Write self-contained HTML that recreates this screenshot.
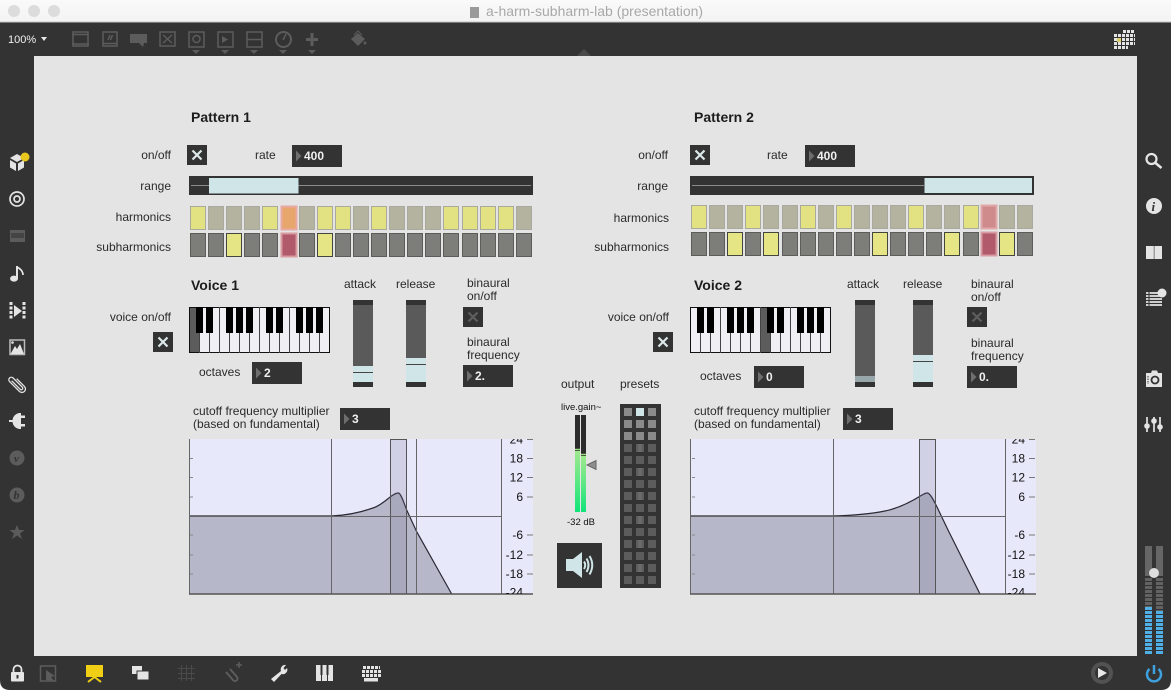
<!DOCTYPE html>
<html><head><meta charset="utf-8"><title>a-harm-subharm-lab (presentation)</title>
<style>
html,body{margin:0;padding:0;background:#fff}
svg{display:block;position:absolute;left:0;top:0}
text{font-family:"Liberation Sans",Arial,sans-serif;font-size:12px;fill:#2a2a2a}
.h{font-weight:bold;font-size:14px;fill:#1c1c1c}
.e{text-anchor:end}
.n{font-weight:bold;fill:#f0f0f0;font-size:12px}
.g{font-size:12px;fill:#111;text-anchor:end}
.Cy{fill:#e3e283;stroke:#a9a99c}.Cg{fill:#b3b39f;stroke:#a9a9a0}.Co{fill:#e7a76c;stroke:#e8a8a4;stroke-width:2}.Cp{fill:#cf8a8c;stroke:#e0a8a8;stroke-width:2}
.Cd{fill:#7d7d79;stroke:#5c5c58}.CY{fill:#e6e586;stroke:#454540}.Cr{fill:#b05a6c;stroke:#d99aa0;stroke-width:2}
.i{fill:#e4e4e4}.dim{fill:#5c5c5c}.ds{fill:none;stroke:#5c5c5c;stroke-width:1.5}
.ws{fill:none;stroke:#e6e6e6;stroke-width:2}
</style></head><body>
<svg width="1171" height="690" viewBox="0 0 1171 690" xmlns="http://www.w3.org/2000/svg">
<defs>
<linearGradient id="tb" x1="0" y1="0" x2="0" y2="1"><stop offset="0" stop-color="#fafafa"/><stop offset="1" stop-color="#f3f3f3"/></linearGradient>
<linearGradient id="gr" x1="0" y1="0" x2="0" y2="1"><stop offset="0" stop-color="#9fe88e"/><stop offset=".5" stop-color="#5ce884"/><stop offset="1" stop-color="#10e47a"/></linearGradient>
<clipPath id="c1"><rect x="189" y="439" width="346" height="155"/></clipPath>
<clipPath id="c2"><rect x="690" y="439" width="346" height="155"/></clipPath>
<g id="tog"><rect width="20" height="20" fill="#333"/><path d="M5.500 5.500L14.500 14.500M14.500 5.500L5.500 14.500" stroke="#dde8ea" stroke-width="2.200" fill="none"/></g>
<g id="togd"><rect width="20" height="20" fill="#333"/><path d="M5.500 5.500L14.500 14.500M14.500 5.500L5.500 14.500" stroke="#5e5e5e" stroke-width="2.200" fill="none"/></g>
<g id="num"><rect width="50" height="22" fill="#333"/><path d="M4 5.500L9.500 11L4 16.500Z" fill="#6e6e6e"/></g>
<g id="blk"><rect x="0" width="7" height="26" fill="#000"/><rect x="10" width="7" height="26" fill="#000"/><rect x="30" width="7" height="26" fill="#000"/><rect x="40" width="7" height="26" fill="#000"/><rect x="50" width="7" height="26" fill="#000"/><rect x="70" width="7" height="26" fill="#000"/><rect x="80" width="7" height="26" fill="#000"/><rect x="100" width="7" height="26" fill="#000"/><rect x="110" width="7" height="26" fill="#000"/><rect x="120" width="7" height="26" fill="#000"/></g>
<g id="wh"><path d="M10.500 0V46M20.500 0V46M30.500 0V46M40.500 0V46M50.500 0V46M60.500 0V46M70.500 0V46M80.500 0V46M90.500 0V46M100.500 0V46M110.500 0V46M120.500 0V46M130.500 0V46" stroke="#444" stroke-width="1"/></g>
<g id="arr"><path d="M-4 0H4L0 4Z" fill="#5c5c5c"/></g>
<g id="lab"><path d="M0 19.500H3M0 38.500H3M0 58H3M0 96H3M0 116H3M0 135H3" stroke="#888"/>
<text class="g" x="333" y="4.500">24</text><text class="g" x="333" y="23.500">18</text><text class="g" x="333" y="42.500">12</text><text class="g" x="333" y="62">6</text><text class="g" x="333" y="100">-6</text><text class="g" x="333" y="120">-12</text><text class="g" x="333" y="139">-18</text><text class="g" x="333" y="157.500">-24</text>
<path d="M337 0.500H343M337 19.500H343M337 38.500H343M337 58H343M337 96H343M337 116H343M337 135H343" stroke="#777"/></g>
</defs>

<!-- window chrome -->
<rect width="1171" height="690" fill="#333"/>
<rect width="1171" height="22" fill="url(#tb)"/>
<rect y="21.500" width="1171" height="1" fill="#c4c4c4"/>
<circle cx="14" cy="11" r="6" fill="#dcdcdc"/><circle cx="34" cy="11" r="6" fill="#dcdcdc"/><circle cx="54" cy="11" r="6" fill="#dcdcdc"/>
<rect x="470" y="7" width="9" height="11" fill="#9a9a9a"/>
<text x="486" y="16" style="font-size:14px;fill:#a8a8a8">a-harm-subharm-lab (presentation)</text>
<path d="M0 690V680Q0 690 10 690ZM1171 690V680Q1171 690 1161 690Z" fill="#fff"/>
<rect x="34" y="56" width="1103" height="600" fill="#e4e4e4"/>
<path d="M577 56L584 49L591 56Z" fill="#4a4a4a"/>

<!-- top toolbar -->
<text x="8" y="43" style="font-size:11px;fill:#f0f0f0">100%</text><path d="M41 37H47L44 41Z" fill="#e8e8e8"/>
<g>
<rect class="ds" x="73" y="32" width="15" height="14"/><path class="ds" d="M72 34.500H89M72 44H89"/>
<rect class="ds" x="103" y="32" width="14" height="14"/><path class="ds" d="M103 43.500H117M108 40L110 35M110.500 40L112.500 35"/>
<path class="dim" d="M130 34H147V43H144L143 47L139 43H130Z"/>
<rect class="ds" x="160" y="32" width="15" height="14"/><path class="ds" d="M163 35L172 43M172 35L163 43"/>
<rect class="ds" x="189" y="32" width="15" height="15"/><circle class="ds" cx="196.500" cy="39" r="3.500"/>
<rect class="ds" x="218" y="32" width="15" height="15"/><path class="dim" d="M222 36L228 39.500L222 43Z"/>
<rect class="ds" x="247" y="32" width="15" height="15"/><path class="ds" d="M247 39.500H262"/>
<circle class="ds" cx="283.500" cy="39.500" r="7.500" style="stroke-width:2"/><path class="ds" d="M283 40L286 34"/>
<path d="M312 33V46M306 39.500H318" stroke="#5c5c5c" stroke-width="3" fill="none"/>
<path class="dim" d="M351 39L358 33L365 39L358 46Z"/><path d="M354 35L358 31L362 35" fill="none" stroke="#5c5c5c"/><circle class="dim" cx="365" cy="43" r="1.500"/>
<use href="#arr" x="196" y="50"/><use href="#arr" x="225" y="50"/><use href="#arr" x="254" y="50"/><use href="#arr" x="283" y="50"/><use href="#arr" x="312" y="50"/>
</g>
<!-- top right grid -->
<g stroke="#e4e4e4" stroke-width="3" stroke-dasharray="3 1">
<path d="M1123 31.500H1135M1114 35.500H1135M1114 39.500H1135M1114 43.500H1135M1114 47.500H1128"/>
</g><rect x="1117" y="38" width="4" height="4" fill="#d8cf6a"/>

<!-- left sidebar -->
<path class="i" d="M17 154L24 158L17 162L10 158ZM10 160L16 163.500V171L10 167.500ZM24 160L18 163.500V171L24 167.500Z"/><circle cx="25" cy="157" r="4.500" fill="#e8c81e"/>
<circle cx="17" cy="199" r="7" fill="none" stroke="#e4e4e4" stroke-width="1.700"/><circle cx="17" cy="199" r="3" fill="none" stroke="#e4e4e4" stroke-width="1.700"/>
<rect x="10" y="230" width="15" height="12" fill="#5c5c5c"/><rect x="11" y="233" width="13" height="5" fill="#444"/>
<path class="i" d="M18 266V279A4 3 0 1 1 16 276V266Z"/><path class="ws" d="M17 267Q23 270 23 275" style="stroke-width:1.700"/>
<path d="M11 302V320M24 302V320" stroke="#e4e4e4" stroke-width="3" stroke-dasharray="3 1.500" fill="none"/><path class="i" d="M14 305L22 311L14 317Z"/>
<rect x="10" y="340" width="14.500" height="14.500" fill="none" stroke="#bbb" stroke-width="1.500"/><path class="i" d="M10.500 354L15 346L17 349L20 344L24 354Z"/><circle class="i" cx="12.500" cy="342.500" r="1.300"/>
<g transform="rotate(-45 17 384)"><path d="M15.500 378V390A1.500 1.500 0 0 0 18.500 390V377A2.500 2.500 0 0 0 13.500 377V391A3.500 3.500 0 0 0 20.500 391V380" fill="none" stroke="#e4e4e4" stroke-width="1.300"/></g>
<path class="i" d="M9 420H12.500A8 8 0 0 1 19 413H21V429H19A8 8 0 0 1 12.500 422H9Z"/><rect class="i" x="21" y="415.500" width="4" height="2.500"/><rect class="i" x="21" y="424" width="4" height="2.500"/>
<circle cx="17" cy="458" r="7.500" fill="#5c5c5c"/><text x="14" y="462" style="font:italic bold 11px 'Liberation Serif',serif;fill:#333">v</text>
<circle cx="17" cy="495" r="7.500" fill="#5c5c5c"/><text x="13.500" y="499" style="font:italic bold 12px 'Liberation Serif',serif;fill:#333">b</text>
<path class="dim" d="M17 525L19 530H24.500L20 533.500L22 539L17 535.500L12 539L14 533.500L9.500 530H15Z"/>

<!-- right sidebar -->
<circle cx="1151.500" cy="159" r="5" fill="none" stroke="#e6e6e6" stroke-width="2.200"/><path d="M1155.500 163L1161.500 168" stroke="#e6e6e6" stroke-width="2.500"/>
<circle class="i" cx="1154" cy="206" r="8"/><text x="1151.500" y="211" style="font:italic bold 13px 'Liberation Serif',serif;fill:#333">i</text>
<rect class="i" x="1146" y="246" width="16" height="13"/><rect x="1153.500" y="246" width="1.500" height="13" fill="#a0a0a0"/>
<path d="M1146 293H1160M1146 296H1162M1146 299H1162M1146 302H1162M1146 305H1162" stroke="#e4e4e4" stroke-width="1.700"/><path d="M1149 292V306" stroke="#333" stroke-width="1"/><circle class="i" cx="1162" cy="293" r="4.500"/>
<path class="i" d="M1146 373H1151L1152 370.500H1157L1158 373H1162V387H1146Z"/><circle cx="1155" cy="380" r="3.500" fill="none" stroke="#333" stroke-width="1.800"/><path d="M1148 376V384" stroke="#333" stroke-dasharray="1.500 1"/>
<path d="M1147 417V432M1154 417V432M1160 417V432" stroke="#e4e4e4" stroke-width="1.700"/><circle class="i" cx="1147" cy="426" r="2.800"/><circle class="i" cx="1154" cy="421" r="2.800"/><circle class="i" cx="1160" cy="427" r="2.800"/>

<!-- right meter -->
<rect x="1145" y="546" width="7" height="30" fill="#666"/><rect x="1156" y="546" width="7" height="30" fill="#666"/>
<path d="M1148.500 578V607M1159.500 578V611" stroke="#626262" stroke-width="7" stroke-dasharray="3 1"/>
<path d="M1148.500 607V654M1159.500 611V654" stroke="#4fb0e8" stroke-width="7" stroke-dasharray="3 1"/>
<circle cx="1154" cy="573" r="5" fill="#dedede"/>

<!-- bottom bar -->
<rect x="11" y="672" width="13" height="9.500" rx="1" fill="#e6e6e6"/><path d="M13.500 672V669.500A4 4 0 0 1 21.500 669.500V672" fill="none" stroke="#e6e6e6" stroke-width="1.800"/><rect x="16.500" y="675" width="2" height="3.500" fill="#333"/>
<path d="M40.500 666H55.500V681H40.500Z" class="ds"/><path class="dim" d="M46 670L55 676L51 677L54 681L46 680Z"/>
<rect x="86" y="665" width="17" height="12" fill="#f0cf14"/><path d="M88 682L94.500 677L101 682" fill="none" stroke="#f0cf14" stroke-width="2"/>
<rect x="132" y="666" width="10" height="8" fill="#e4e4e4"/><rect x="137" y="671" width="12" height="9" fill="#e4e4e4" stroke="#333"/>
<path d="M181.500 665V681M186.500 665V681M191.500 665V681M178 668.500H195M178 673.500H195M178 678.500H195" stroke="#4a4a4a" stroke-width="1"/>
<path d="M226 672L233 680A2 2 0 0 0 237 677L230 669" fill="none" stroke="#5c5c5c" stroke-width="2"/><path d="M236 665H242M239 662V668" stroke="#5c5c5c" stroke-width="1.500"/>
<path d="M271 679L281 671A4.500 4.500 0 0 1 286 665L283.500 668L285 670L287 668A4.500 4.500 0 0 1 281.500 674L274 682Z" fill="#e6e6e6"/>
<rect x="316" y="665" width="17" height="16" fill="#e4e4e4"/><path d="M321.500 665V681M327.500 665V681" stroke="#333" stroke-width="1"/><rect x="320.500" y="665" width="2" height="10" fill="#333"/><rect x="326.500" y="665" width="2" height="10" fill="#333"/>
<path d="M363 667.500H380M362 671.500H381M362 675.500H381" stroke="#e4e4e4" stroke-width="3" stroke-dasharray="3 1"/><rect x="364" y="678" width="14" height="3.500" fill="#e4e4e4"/>
<circle cx="1102" cy="673" r="9" fill="none" stroke="#525252" stroke-width="4"/><path d="M1098 668L1107 673L1098 678Z" fill="#e8e8e8"/>
<path d="M1149.500 669A7 7 0 1 0 1158.500 669" fill="none" stroke="#3ea0dc" stroke-width="2.500"/><path d="M1154 665V674" stroke="#3ea0dc" stroke-width="2.500"/>

<!-- PATTERN 1 -->
<text class="h" x="191" y="122">Pattern 1</text>
<text class="e" x="171" y="159">on/off</text><use href="#tog" x="187" y="145"/>
<text x="255" y="159">rate</text><use href="#num" x="292" y="145"/><text class="n" x="304" y="160">400</text>
<text class="e" x="171" y="190">range</text>
<rect x="189" y="176" width="344" height="19" fill="#333"/><path d="M191 185.500H531" stroke="#8a8a8a"/><rect x="209" y="178" width="89.500" height="15.500" fill="#cfe5e8"/>
<text class="e" x="171" y="221">harmonics</text><text class="e" x="171" y="251">subharmonics</text>
<g>
<rect class="Cy" x="190.500" y="206.500" width="15" height="23"/><rect class="Cg" x="208.500" y="206.500" width="15" height="23"/><rect class="Cg" x="226.500" y="206.500" width="15" height="23"/><rect class="Cg" x="244.500" y="206.500" width="15" height="23"/><rect class="Cy" x="262.500" y="206.500" width="15" height="23"/><rect class="Co" x="281.500" y="206.500" width="15" height="23"/><rect class="Cg" x="299.500" y="206.500" width="15" height="23"/><rect class="Cy" x="317.500" y="206.500" width="15" height="23"/><rect class="Cy" x="335.500" y="206.500" width="15" height="23"/><rect class="Cg" x="353.500" y="206.500" width="15" height="23"/><rect class="Cy" x="371.500" y="206.500" width="15" height="23"/><rect class="Cg" x="389.500" y="206.500" width="15" height="23"/><rect class="Cg" x="407.500" y="206.500" width="15" height="23"/><rect class="Cg" x="425.500" y="206.500" width="15" height="23"/><rect class="Cy" x="443.500" y="206.500" width="15" height="23"/><rect class="Cy" x="462.500" y="206.500" width="15" height="23"/><rect class="Cy" x="480.500" y="206.500" width="15" height="23"/><rect class="Cy" x="498.500" y="206.500" width="15" height="23"/><rect class="Cg" x="516.500" y="206.500" width="15" height="23"/>
<rect class="Cd" x="190.500" y="233.500" width="15" height="23"/><rect class="Cd" x="208.500" y="233.500" width="15" height="23"/><rect class="CY" x="226.500" y="233.500" width="15" height="23"/><rect class="Cd" x="244.500" y="233.500" width="15" height="23"/><rect class="Cd" x="262.500" y="233.500" width="15" height="23"/><rect class="Cr" x="281.500" y="233.500" width="15" height="23"/><rect class="Cd" x="299.500" y="233.500" width="15" height="23"/><rect class="CY" x="317.500" y="233.500" width="15" height="23"/><rect class="Cd" x="335.500" y="233.500" width="15" height="23"/><rect class="Cd" x="353.500" y="233.500" width="15" height="23"/><rect class="Cd" x="371.500" y="233.500" width="15" height="23"/><rect class="Cd" x="389.500" y="233.500" width="15" height="23"/><rect class="Cd" x="407.500" y="233.500" width="15" height="23"/><rect class="Cd" x="425.500" y="233.500" width="15" height="23"/><rect class="Cd" x="443.500" y="233.500" width="15" height="23"/><rect class="Cd" x="462.500" y="233.500" width="15" height="23"/><rect class="Cd" x="480.500" y="233.500" width="15" height="23"/><rect class="Cd" x="498.500" y="233.500" width="15" height="23"/><rect class="Cd" x="516.500" y="233.500" width="15" height="23"/>
</g>

<!-- VOICE 1 -->
<text class="h" x="191" y="290">Voice 1</text>
<text x="344" y="288">attack</text><text x="396" y="288">release</text>
<text x="467" y="287">binaural</text><text x="467" y="300">on/off</text>
<text class="e" x="171" y="321">voice on/off</text><use href="#tog" x="153" y="332"/>
<rect x="189.500" y="307.500" width="140" height="45" fill="#f0f0f4" stroke="#111"/>
<rect x="190" y="308" width="10" height="44" fill="#5c5c5c"/>
<use href="#wh" x="189" y="307"/><use href="#blk" x="196" y="307"/>
<text x="199" y="376">octaves</text><use href="#num" x="252" y="362"/><text class="n" x="264" y="377">2</text>
<rect x="353" y="300" width="20" height="87" fill="#5a5a5a"/><rect x="353" y="366" width="20" height="16" fill="#cfe5e8"/><rect x="353" y="300" width="20" height="5" fill="#333"/><rect x="353" y="382" width="20" height="5" fill="#333"/><path d="M353 372.500H373" stroke="#444"/>
<rect x="406" y="300" width="20" height="87" fill="#5a5a5a"/><rect x="406" y="358" width="20" height="24" fill="#cfe5e8"/><rect x="406" y="300" width="20" height="5" fill="#333"/><rect x="406" y="382" width="20" height="5" fill="#333"/><path d="M406 364.500H426" stroke="#444"/>
<use href="#togd" x="463" y="307"/>
<text x="467" y="346">binaural</text><text x="467" y="359">frequency</text>
<use href="#num" x="463" y="365"/><text class="n" x="475" y="380">2.</text>
<text x="193" y="415">cutoff frequency multiplier</text><text x="193" y="428">(based on fundamental)</text>
<use href="#num" x="340" y="408"/><text class="n" x="352" y="423">3</text>

<!-- graph 1 -->
<rect x="189" y="439" width="344" height="155" fill="#e8e8fb"/>
<path d="M189 516L331 516C345 515.500 360 512.500 373 508C382 505 388 498 393 495C395.500 493.500 397 492.800 398.500 493C401 493.500 404 503 406.700 510L416.700 531.700L451.700 594H189Z" fill="#b6b7c9"/>
<path d="M189 516L331 516C345 515.500 360 512.500 373 508C382 505 388 498 393 495C395.500 493.500 397 492.800 398.500 493C401 493.500 404 503 406.700 510L416.700 531.700L451.700 594" fill="none" stroke="#2a2a35" stroke-width="1.200"/>
<rect x="390.500" y="439.500" width="16" height="154.500" fill="#6a6a8a" fill-opacity=".18" stroke="#555"/>
<path d="M189.500 439V594M331.500 439V594M416.500 439V594M501.500 439V594M189 516.500H501" stroke="#666" stroke-width="1"/>
<path d="M189 594H533" stroke="#555" stroke-width="1.500"/>
<g clip-path="url(#c1)"><use href="#lab" x="190" y="439"/></g>

<!-- CENTER -->
<text x="561" y="388">output</text><text x="620" y="388">presets</text>
<text x="561" y="410" style="font-size:9.500px;fill:#111">live.gain~</text>
<rect x="575" y="415" width="11" height="97" fill="#2b2b2b"/>
<rect x="575" y="451" width="5" height="61" fill="url(#gr)"/><rect x="581" y="456" width="5" height="56" fill="url(#gr)"/>
<path d="M575 449.500H580" stroke="#9de080" stroke-width="1.500"/><path d="M581 454.500H586" stroke="#9de080" stroke-width="1.500"/>
<rect x="580" y="415" width="1" height="97" fill="#e4e4e4"/>
<path d="M587 465L596 460.500V469.500Z" fill="#8e8e8e" stroke="#666"/>
<text x="567" y="525" style="font-size:9.500px;fill:#111">-32 dB</text>
<rect x="557" y="543" width="45" height="45" fill="#333"/>
<path d="M566 559H573L582 552V578L573 571H566Z" fill="#cfe5e8"/>
<path d="M584 561.500Q586.500 565 584 569M586.500 558.500Q590.500 565 586.500 572M589.500 556Q595 565 589.500 574.500" fill="none" stroke="#cfe5e8" stroke-width="2"/>
<rect x="620" y="404" width="41" height="184" fill="#333"/>
<path d="M628 408V444M640 408V444M652 408V444" stroke="#8a8a8a" stroke-width="8" stroke-dasharray="8 4"/>
<path d="M628 444V584M640 444V584M652 444V584" stroke="#5c5c5c" stroke-width="8" stroke-dasharray="8 4"/>
<rect x="636" y="408" width="8" height="8" fill="#cfe5e8"/>
<path d="M638 444H642V452H638ZM638 468H642V476H638ZM638 492H642V500H638ZM638 516H642V524H638ZM638 540H642V548H638ZM638 564H642V572H638Z" fill="#6a6a6a"/>

<!-- PATTERN 2 -->
<text class="h" x="694" y="122">Pattern 2</text>
<text class="e" x="668" y="159">on/off</text><use href="#tog" x="690" y="145"/>
<text x="767" y="159">rate</text><use href="#num" x="805" y="145"/><text class="n" x="817" y="160">400</text>
<text class="e" x="668" y="190">range</text>
<rect x="690" y="176" width="344" height="19" fill="#333"/><path d="M692 185.500H924" stroke="#8a8a8a"/><rect x="924.500" y="178" width="107.500" height="15" fill="#cfe5e8"/>
<text class="e" x="669" y="222">harmonics</text><text class="e" x="669" y="251">subharmonics</text>
<g>
<rect class="Cy" x="691.500" y="205.500" width="15" height="23"/><rect class="Cg" x="709.500" y="205.500" width="15" height="23"/><rect class="Cg" x="727.500" y="205.500" width="15" height="23"/><rect class="Cy" x="745.500" y="205.500" width="15" height="23"/><rect class="Cg" x="763.500" y="205.500" width="15" height="23"/><rect class="Cg" x="782.500" y="205.500" width="15" height="23"/><rect class="Cy" x="800.500" y="205.500" width="15" height="23"/><rect class="Cg" x="818.500" y="205.500" width="15" height="23"/><rect class="Cy" x="836.500" y="205.500" width="15" height="23"/><rect class="Cg" x="854.500" y="205.500" width="15" height="23"/><rect class="Cg" x="872.500" y="205.500" width="15" height="23"/><rect class="Cg" x="890.500" y="205.500" width="15" height="23"/><rect class="Cy" x="908.500" y="205.500" width="15" height="23"/><rect class="Cg" x="926.500" y="205.500" width="15" height="23"/><rect class="Cg" x="944.500" y="205.500" width="15" height="23"/><rect class="Cy" x="963.500" y="205.500" width="15" height="23"/><rect class="Cp" x="981.500" y="205.500" width="15" height="23"/><rect class="Cg" x="999.500" y="205.500" width="15" height="23"/><rect class="Cg" x="1017.500" y="205.500" width="15" height="23"/>
<rect class="Cd" x="691.500" y="232.500" width="15" height="23"/><rect class="Cd" x="709.500" y="232.500" width="15" height="23"/><rect class="CY" x="727.500" y="232.500" width="15" height="23"/><rect class="Cd" x="745.500" y="232.500" width="15" height="23"/><rect class="CY" x="763.500" y="232.500" width="15" height="23"/><rect class="Cd" x="782.500" y="232.500" width="15" height="23"/><rect class="Cd" x="800.500" y="232.500" width="15" height="23"/><rect class="Cd" x="818.500" y="232.500" width="15" height="23"/><rect class="Cd" x="836.500" y="232.500" width="15" height="23"/><rect class="Cd" x="854.500" y="232.500" width="15" height="23"/><rect class="CY" x="872.500" y="232.500" width="15" height="23"/><rect class="Cd" x="890.500" y="232.500" width="15" height="23"/><rect class="Cd" x="908.500" y="232.500" width="15" height="23"/><rect class="Cd" x="926.500" y="232.500" width="15" height="23"/><rect class="CY" x="944.500" y="232.500" width="15" height="23"/><rect class="Cd" x="963.500" y="232.500" width="15" height="23"/><rect class="Cr" x="981.500" y="232.500" width="15" height="23"/><rect class="CY" x="999.500" y="232.500" width="15" height="23"/><rect class="Cd" x="1017.500" y="232.500" width="15" height="23"/>
</g>

<!-- VOICE 2 -->
<text class="h" x="694" y="290">Voice 2</text>
<text x="847" y="288">attack</text><text x="903" y="288">release</text>
<text x="971" y="288">binaural</text><text x="971" y="301">on/off</text>
<text class="e" x="669" y="321">voice on/off</text><use href="#tog" x="653" y="332"/>
<rect x="690.500" y="307.500" width="140" height="45" fill="#f0f0f4" stroke="#111"/>
<rect x="761" y="308" width="10" height="44" fill="#5c5c5c"/>
<use href="#wh" x="690" y="307"/><use href="#blk" x="697" y="307"/>
<text x="700" y="380">octaves</text><use href="#num" x="754" y="366"/><text class="n" x="766" y="381">0</text>
<rect x="855" y="300" width="20" height="87" fill="#5a5a5a"/><rect x="855" y="376" width="20" height="6" fill="#98a8aa"/><rect x="855" y="300" width="20" height="5" fill="#333"/><rect x="855" y="382" width="20" height="5" fill="#333"/>
<rect x="913" y="300" width="20" height="87" fill="#5a5a5a"/><rect x="913" y="355" width="20" height="27" fill="#cfe5e8"/><rect x="913" y="300" width="20" height="5" fill="#333"/><rect x="913" y="382" width="20" height="5" fill="#333"/><path d="M913 361.500H933" stroke="#444"/>
<use href="#togd" x="967" y="307"/>
<text x="971" y="347">binaural</text><text x="971" y="360">frequency</text>
<use href="#num" x="967" y="366"/><text class="n" x="979" y="381">0.</text>
<text x="694" y="415">cutoff frequency multiplier</text><text x="694" y="428">(based on fundamental)</text>
<use href="#num" x="843" y="408"/><text class="n" x="855" y="423">3</text>

<!-- graph 2 -->
<rect x="690" y="439" width="346" height="155" fill="#e8e8fb"/>
<path d="M690 516L833 516C850 515.500 870 514 885 511C900 508 914 500 922 495C924.500 493.500 926 492.800 927.500 493C930.500 493.500 934 501 937 507L948 530L980 594H690Z" fill="#b6b7c9"/>
<path d="M690 516L833 516C850 515.500 870 514 885 511C900 508 914 500 922 495C924.500 493.500 926 492.800 927.500 493C930.500 493.500 934 501 937 507L948 530L980 594" fill="none" stroke="#2a2a35" stroke-width="1.200"/>
<rect x="919.500" y="439.500" width="16" height="154.500" fill="#6a6a8a" fill-opacity=".18" stroke="#555"/>
<path d="M690.500 439V594M833.500 439V594M1005.500 439V594M690 516.500H1005" stroke="#666" stroke-width="1"/>
<path d="M690 594H1036" stroke="#555" stroke-width="1.500"/>
<g clip-path="url(#c2)"><use href="#lab" x="692" y="439"/></g>
</svg>
</body></html>
